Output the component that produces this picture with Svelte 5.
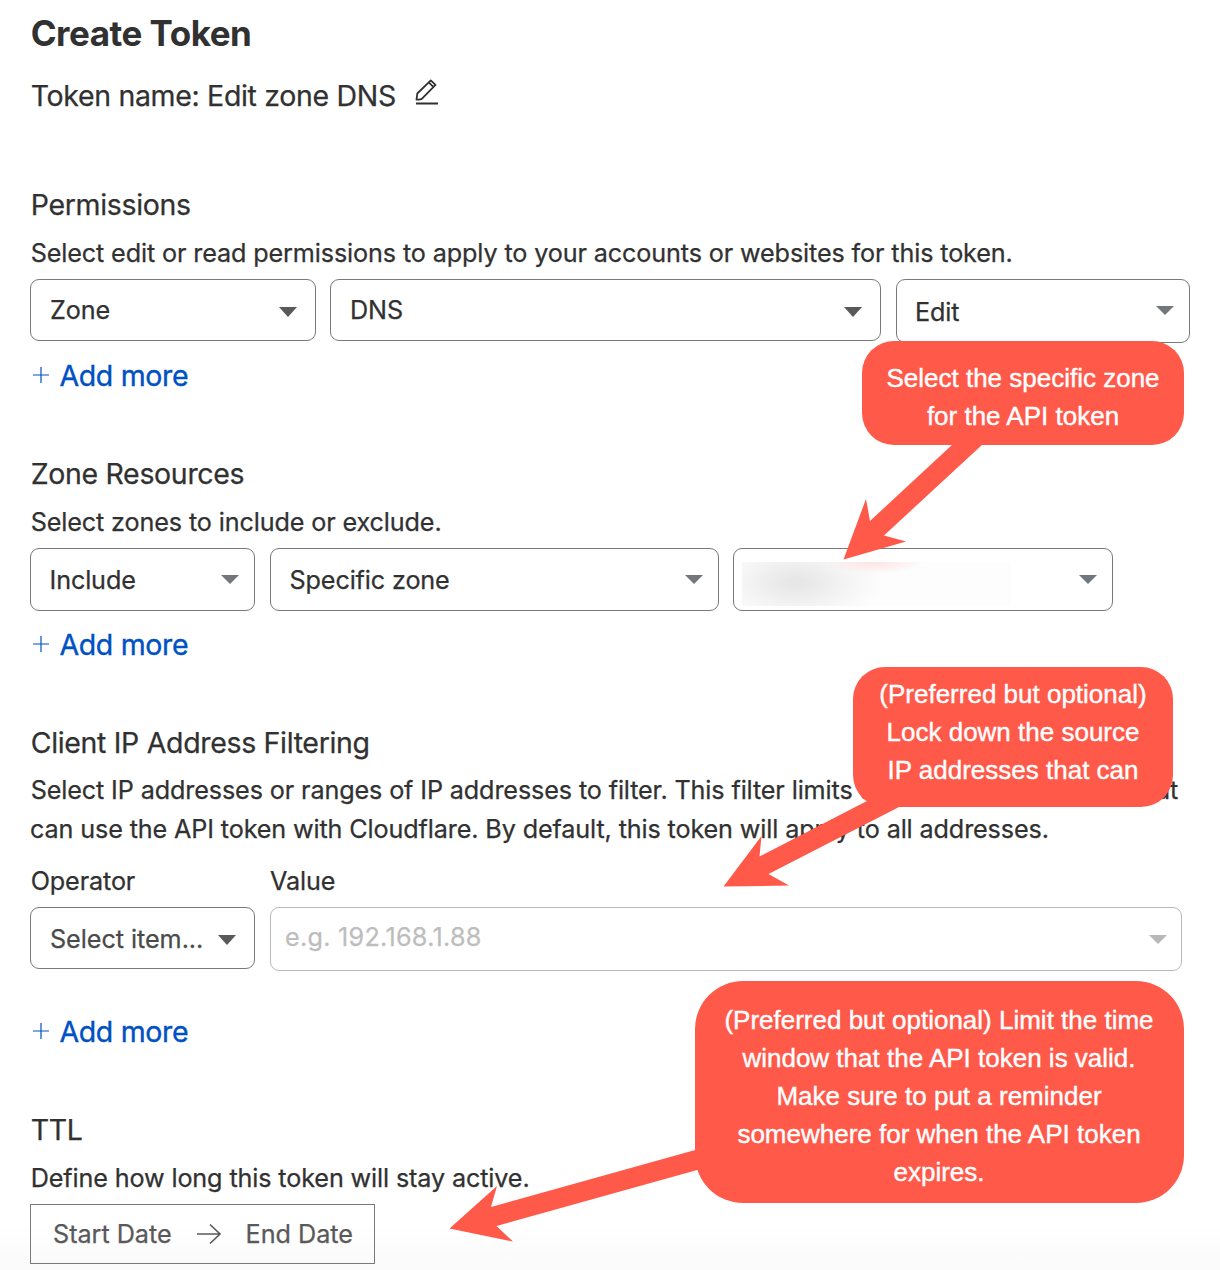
<script>
  const permissions = [
    { label: 'Zone', width: 286, height: 62, tone: 'dark', gap: 0 },
    { label: 'DNS', width: 551, height: 62, tone: 'dark', gap: 14 },
    { label: 'Edit', width: 294, height: 64, tone: 'grey', gap: 15 },
  ];
  const resources = [
    { label: 'Include', width: 225, height: 63, tone: 'grey', gap: 0 },
    { label: 'Specific zone', width: 449, height: 63, tone: 'grey', gap: 15 },
    { label: '', width: 380, height: 63, tone: 'grey', gap: 14, redacted: true },
  ];
</script>

{#snippet caret(tone)}
  <svg class="caret {tone}" width="18" height="10" viewBox="0 0 18 10"><path d={tone === 'dark' ? 'M0 0h18L9 10z' : 'M0 0h18L9 9z'} /></svg>
{/snippet}

{#snippet select(item)}
  <div class="select {item.tone}" style:width="{item.width}px" style:height="{item.height}px" style:margin-left="{item.gap}px">
    {#if item.redacted}<span class="redacted"></span>{/if}
    <span>{item.label}</span>
    {@render caret(item.tone)}
  </div>
{/snippet}

{#snippet addMore()}
  <a class="add">
    <svg width="18" height="18" viewBox="0 0 18 18"><path d="M9 1v16M1 9h16" /></svg>
    <span>Add more</span>
  </a>
{/snippet}

<main>
  <h1>Create Token</h1>
  <div class="name">
    <span>Token name: Edit zone DNS</span>
    <svg width="24" height="26" viewBox="0 0 24 26">
      <path d="M1 24.500h22M1.500 20.700l.8-6.200L15.800 1.400l4.700 4.400L7.300 19.300q-1 1.200-5.800 1.400zM13.800 3.400l4.500 4.500" />
    </svg>
  </div>

  <section>
    <h2>Permissions</h2>
    <p>Select edit or read permissions to apply to your accounts or websites for this token.</p>
    <div class="row permissions">{#each permissions as item}{@render select(item)}{/each}</div>
    {@render addMore()}
  </section>

  <section>
    <h2>Zone Resources</h2>
    <p>Select zones to include or exclude.</p>
    <div class="row">{#each resources as item}{@render select(item)}{/each}</div>
    {@render addMore()}
  </section>

  <section>
    <h2>Client IP Address Filtering</h2>
    <p class="long">Select IP addresses or ranges of IP addresses to filter. This filter limits the client IP addresses that<br />can use the API token with Cloudflare. By default, this token will apply to all addresses.</p>
    <div class="row filter">
      <div class="field">
        <span class="label">Operator</span>
        <div class="select dark operator"><span>Select item...</span>{@render caret('dark')}</div>
      </div>
      <div class="field">
        <span class="label">Value</span>
        <div class="select light value"><span>e.g. 192.168.1.88</span>{@render caret('light')}</div>
      </div>
    </div>
    {@render addMore()}
  </section>

  <section>
    <h2>TTL</h2>
    <p>Define how long this token will stay active.</p>
    <div class="dates">
      <span>Start Date</span>
      <svg width="26" height="22" viewBox="0 0 26 22"><path d="M1 11h23M14 1.500l10 9.500-10 9.500" /></svg>
      <span>End Date</span>
    </div>
  </section>

  <svg class="arrows" width="1220" height="1270" viewBox="0 0 1220 1270">
    <path d="M953 444L983 444 884 535.500 906 541.500 843.500 559.500 866 499 870 521z" />
    <path d="M868 801L901 806 768.500 874 789 885.500 723.500 886.500 761.500 836 759.500 856.500 866 801.500z" />
    <path d="M697 1149.500L699 1169.500 496.500 1226 513 1241.500 449.500 1228.500 497 1186 491 1207z" />
  </svg>
  <aside class="callout zone">Select the specific zone<br />for the API token</aside>
  <aside class="callout source">(Preferred but optional)<br />Lock down the source<br />IP addresses that can</aside>
  <aside class="callout expiry">(Preferred but optional) Limit the time<br />window that the API token is valid.<br />Make sure to put a reminder<br />somewhere for when the API token<br />expires.</aside>
</main>

<style>
  :global(body) { background: #fff; }
  main {
    position: relative;
    box-sizing: border-box;
    width: 1220px;
    height: 1270px;
    padding: 13px 30px 0;
    overflow: hidden;
    color: #313131;
    font-family: Inter, "Liberation Sans", sans-serif;
    font-size: 25.2px;
    letter-spacing: -0.13px;
    -webkit-text-stroke: 0.25px currentColor;
    background: linear-gradient(#fff 1225px, #fafafa 1270px);
  }
  h1, h2, p { margin: 0; white-space: nowrap; }
  h1, h2, p, .label, .name { text-indent: 0.7px; }
  h1 { font-size: 35px; line-height: 40px; font-weight: 700; letter-spacing: -0.5px; -webkit-text-stroke: 0; }
  h2, .name, .add { font-size: 28.5px; line-height: 38px; font-weight: 400; letter-spacing: -0.33px; }
  .name { display: flex; align-items: flex-start; gap: 19px; height: 38px; margin: 24px 0 71px; }
  svg { fill: none; stroke: currentColor; }
  .name svg { margin-top: 1.5px; stroke-width: 1.8; stroke-linejoin: round; }
  section { margin-bottom: 60px; }
  p { margin: 10px 0 6px; line-height: 39px; }
  p.long { margin: 9px 0 13px; }
  .row { display: flex; align-items: flex-start; height: 64px; }
  .select {
    position: relative;
    box-sizing: border-box;
    display: flex;
    align-items: center;
    justify-content: space-between;
    flex: none;
    padding: 0 18px 0 19px;
    border: 1px solid #797979;
    border-radius: 9px;
    background: #fff;
  }
  .select.grey { padding: 0 15px 0 18.5px; }
  .permissions .grey { padding-left: 18px; }
  .permissions .grey span { margin-top: 2px; }
  .caret { flex: none; stroke: none; margin-top: 3px; }
  .caret.dark { fill: #595959; }
  .caret.grey { fill: #72777b; margin-top: 0; }
  .caret.light { fill: #b8b8b8; margin-top: 4px; }
  .redacted {
    position: absolute;
    left: 8px;
    top: 13px;
    width: 269px;
    height: 44px;
    background:
      radial-gradient(ellipse 50px 12px at 132px 0, #ffe2e2, transparent),
      radial-gradient(ellipse 86px 42px at 54px 20px, #e7e7e7 10%, #f5f5f5 62%, transparent),
      #fdfdfd;
  }
  .add { display: flex; align-items: flex-start; gap: 10.5px; margin: 14px 0 0 1.5px; color: #0051c3; -webkit-text-stroke: 0.35px #0051c3; }
  .add span { margin-left: -0.6px; }
  .add svg { margin-top: 9px; stroke-width: 1.2; }
  .filter { height: 109px; gap: 15px; }
  .field { display: flex; flex-direction: column; gap: 6px; }
  .label { line-height: 39px; }
  .field + .field .label { text-indent: 0; }
  .operator { width: 225px; height: 62px; color: #4a4a4a; padding-top: 1px; letter-spacing: -0.05px; }
  .operator .caret { margin-top: 2px; }
  .value {
    width: 912px;
    height: 64px;
    border-color: #b9b9b9;
    color: #bdbdbd;
    padding: 0 14px 4px;
    letter-spacing: 0.27px;
  }
  .value .caret { margin-top: 5px; }
  .filter + .add { margin-top: 42px; }
  .dates {
    box-sizing: border-box;
    display: flex;
    align-items: center;
    gap: 24px;
    width: 345px;
    height: 60px;
    padding: 0 22px;
    border: 1px solid #797979;
    color: #595959;
    white-space: nowrap;
    letter-spacing: -0.03px;
  }
  .dates svg { stroke-width: 1.6; flex: none; }
  .arrows { position: absolute; left: 0; top: 0; fill: #ff594a; stroke: none; }
  .callout {
    position: absolute;
    box-sizing: border-box;
    background: #ff594a;
    color: #fff;
    font: 26px/38px "Liberation Sans", Arial, sans-serif;
    letter-spacing: 0;
    text-align: center;
    white-space: nowrap;
    -webkit-text-stroke: 0.4px #fff;
  }
  .zone { left: 862px; top: 341px; width: 322px; height: 103.500px; padding-top: 18px; border-radius: 32px; }
  .source { left: 853px; top: 667px; width: 320px; height: 140px; padding-top: 8px; border-radius: 32px; }
  .expiry { left: 695px; top: 981px; width: 489px; height: 221.500px; padding: 20px 1px 0 0; border-radius: 48px; }
</style>
